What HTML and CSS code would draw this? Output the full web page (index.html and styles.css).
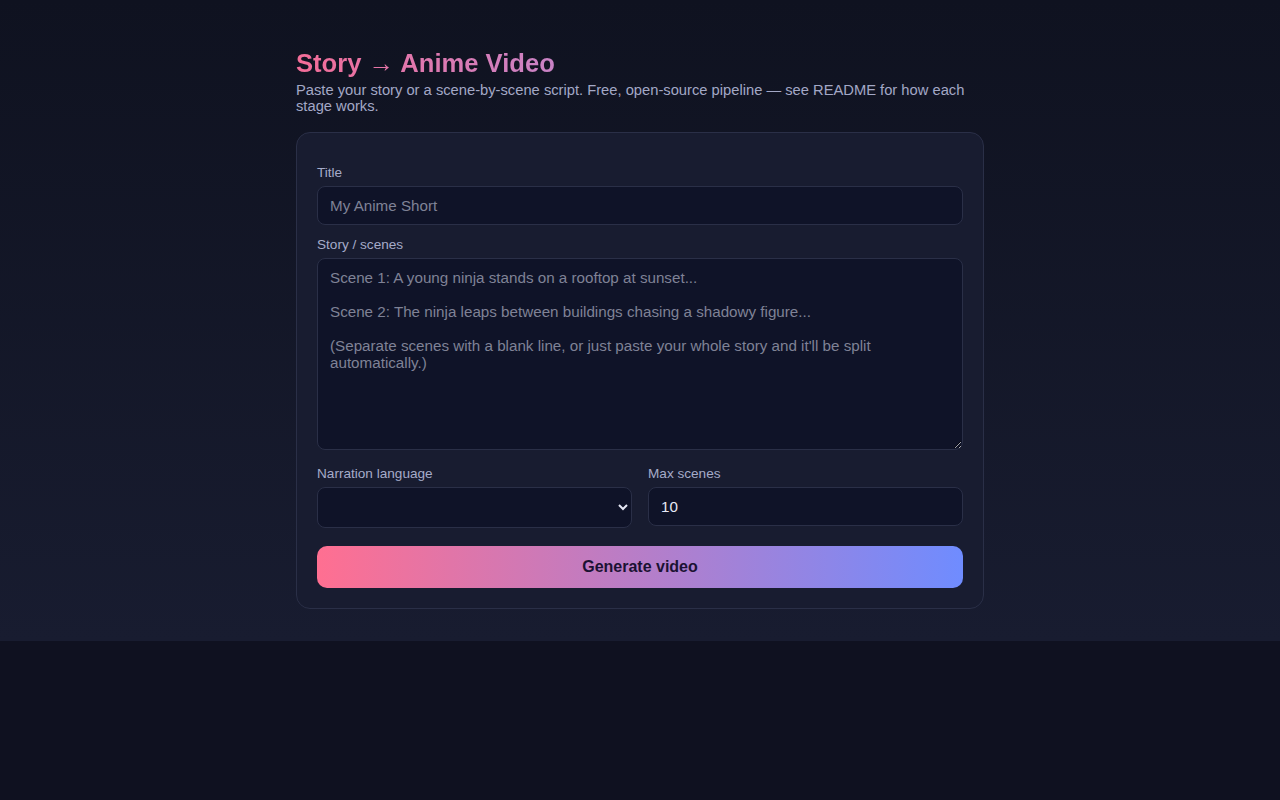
FILE: index.html
```html
<!DOCTYPE html>
<html lang="en">
<head>
<meta charset="utf-8">
<title>Story → Anime Video</title>
<link rel="stylesheet" href="styles.css">
</head>
<body>
<main class="wrap">
  <h1 class="title">Story → Anime Video</h1>
  <p class="sub">Paste your story or a scene-by-scene script. Free, open-source pipeline — see README for how each stage works.</p>
  <form class="card">
    <label class="lbl" for="t">Title</label>
    <input class="field" id="t" type="text" placeholder="My Anime Short">
    <label class="lbl" for="s">Story / scenes</label>
    <textarea class="field area" id="s" placeholder="Scene 1: A young ninja stands on a rooftop at sunset...

Scene 2: The ninja leaps between buildings chasing a shadowy figure...

(Separate scenes with a blank line, or just paste your whole story and it'll be split automatically.)"></textarea>
    <div class="row">
      <div class="col">
        <label class="lbl" for="l">Narration language</label>
        <select class="field sel" id="l"></select>
      </div>
      <div class="col">
        <label class="lbl" for="m">Max scenes</label>
        <input class="field" id="m" type="number" value="10">
      </div>
    </div>
    <button class="btn" type="button">Generate video</button>
  </form>
</main>
</body>
</html>
```
FILE: styles.css
```css
html {
  background: #0f1120;
}
body {
  margin: 0;
  padding: 32px 16px;
  background: linear-gradient(180deg, #0f1220 0%, #181c30 100%);
  font-family: "Liberation Sans", Arial, sans-serif;
  color: #e6e8f5;
}
.wrap {
  max-width: 688px;
  margin: 0 auto;
}
.title {
  margin: 16px 0 4px;
  font-size: 25.6px;
  line-height: 30px;
  font-weight: 700;
  background: linear-gradient(90deg, #f46d98, #c983c6);
  -webkit-background-clip: text;
  background-clip: text;
  color: transparent;
  display: inline-block;
}
.sub {
  margin: 0 0 18px;
  font-size: 14.72px;
  line-height: 16px;
  color: #a3a8c6;
}
.card {
  background: #181c30;
  border: 1px solid #2a2f47;
  border-radius: 14px;
  padding: 20px;
  display: flex;
  flex-direction: column;
}
.lbl {
  display: block;
  margin: 12px 0 6px;
  font-size: 13.6px;
  line-height: 15px;
  color: #a5abc9;
}
.field {
  box-sizing: border-box;
  width: 100%;
  height: 39px;
  padding: 0 12px;
  background: #0f1328;
  border: 1px solid #2a2f47;
  border-radius: 8px;
  color: #e6e8f5;
  font-family: "Liberation Sans", Arial, sans-serif;
  font-size: 15.2px;
  outline: none;
}
.field::placeholder {
  color: #7f8296;
}
.area {
  height: 192px;
  padding: 10px 12px;
  line-height: 17px;
  resize: vertical;
}
.sel {
  height: 41px;
  padding: 0 4px;
  color-scheme: dark;
}
.row {
  display: grid;
  grid-template-columns: 1fr 1fr;
  gap: 16px;
  margin-top: 4px;
}
.col {
  display: flex;
  flex-direction: column;
}
.btn {
  margin-top: 18px;
  height: 42px;
  border: 0;
  border-radius: 10px;
  background: linear-gradient(90deg, #ff6f91, #6f8cff);
  color: #1b1233;
  font-family: "Liberation Sans", Arial, sans-serif;
  font-size: 16px;
  font-weight: 700;
  cursor: pointer;
}
```
